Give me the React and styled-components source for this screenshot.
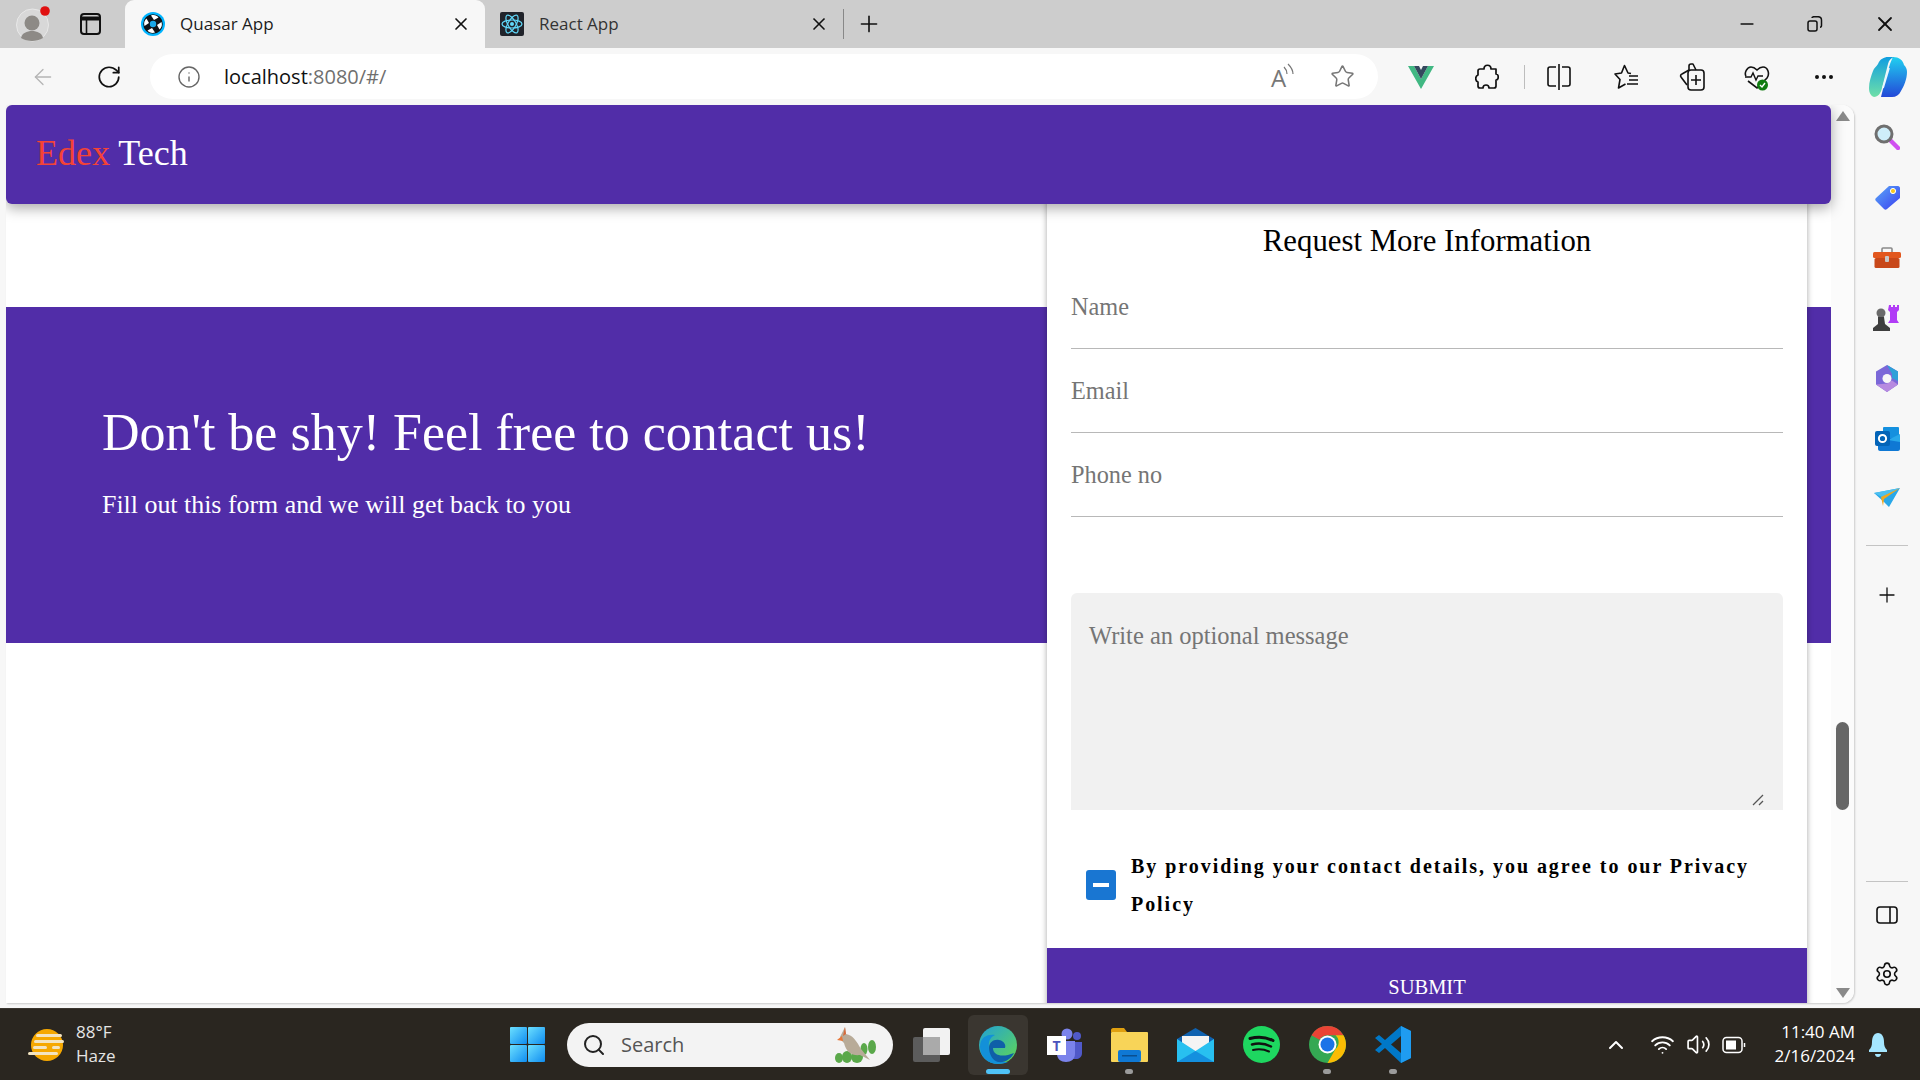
import React from "react";
import styled, { createGlobalStyle } from "styled-components";
import { ArrowLeft, RotateCw, Info, Star, X, Plus, Minus, Search, Settings, ChevronUp, Wifi, Volume2, MoreHorizontal } from "lucide-react";

const GlobalStyle = createGlobalStyle`
  html, body {
    margin: 0;
    padding: 0;
    width: 1920px;
    height: 1080px;
    overflow: hidden;
    background: #f7f7f7;
  }
  * { box-sizing: border-box; }
`;

const PURPLE = "#512da8";
const UI_FONT = `"Open Sans", "Noto Sans", sans-serif`;
const PAGE_FONT = `"Liberation Serif", "Times New Roman", serif`;

/* ---------- small drawn icons ---------- */

const Avatar = () => (
  <svg width="36" height="36" viewBox="0 0 36 36">
    <circle cx="16.500" cy="19" r="16" fill="#d8d8d8" stroke="#e8e8e8" />
    <circle cx="16" cy="17" r="7.500" fill="#8d8a86" />
    <path d="M5 32c1-5 6-7 11-7s10 2 11 7c-3 2-7 3-11 3s-8-1-11-3z" fill="#8d8a86" />
    <circle cx="29" cy="5" r="4.800" fill="#e01010" />
  </svg>
);

const TabsIcon = () => (
  <svg width="21" height="22" viewBox="0 0 21 22" fill="none" stroke="#111" strokeWidth="2">
    <rect x="1" y="1" width="19" height="20" rx="3" />
    <path d="M1 5.500h19" strokeWidth="4" />
    <path d="M6.500 6v15" strokeWidth="1.600" />
  </svg>
);

const QuasarIcon = () => (
  <svg width="24" height="24" viewBox="0 0 24 24">
    <circle cx="12" cy="12" r="12" fill="#00b4ff" />
    <circle cx="12" cy="12" r="9.800" fill="#101418" />
    <circle cx="12" cy="12" r="3.200" fill="#1aa8e8" />
    <g fill="#fff">
      <path d="M10 3.500c3-1 6 0 7.500 2l-4.500 2.500c-1-1.500-2-3-3-4.500z" />
      <path d="M20.500 10c1 3 0 6-2 7.500L16 13c1.500-1 3-2 4.500-3z" />
      <path d="M14 20.500c-3 1-6 0-7.500-2l4.500-2.500c1 1.500 2 3 3 4.500z" />
      <path d="M3.500 14c-1-3 0-6 2-7.500L8 11c-1.500 1-3 2-4.500 3z" />
    </g>
  </svg>
);

const ReactIcon = () => (
  <svg width="24" height="24" viewBox="0 0 24 24">
    <rect width="24" height="24" rx="2" fill="#20232a" />
    <g fill="none" stroke="#61dafb" strokeWidth="1.200">
      <ellipse cx="12" cy="12" rx="10" ry="4" />
      <ellipse cx="12" cy="12" rx="10" ry="4" transform="rotate(60 12 12)" />
      <ellipse cx="12" cy="12" rx="10" ry="4" transform="rotate(120 12 12)" />
    </g>
    <circle cx="12" cy="12" r="2" fill="#61dafb" />
  </svg>
);

const ReadAloudIcon = () => (
  <svg width="26" height="38" viewBox="0 0 26 38" fill="none" stroke="#777" strokeWidth="1.200">
    <text x="1" y="29" fontFamily={UI_FONT} fontSize="24" fill="#777" stroke="none">A</text>
    <path d="M14 9c2 2 3 4 3 7" />
    <path d="M18 6c3 3 5 6 5 10" />
  </svg>
);

const VueIcon = () => (
  <svg width="26" height="24" viewBox="0 0 26 24">
    <path d="M0 1h6l7 13 7-13h6L13 24z" fill="#41b883" />
    <path d="M6 1h5l2 4 2-4h5l-7 13z" fill="#34495e" />
  </svg>
);

const PuzzleIcon = () => (
  <svg width="24" height="26" viewBox="0 0 24 26" fill="none" stroke="#111" strokeWidth="1.700" strokeLinejoin="round">
    <path d="M9 5c0-5 7-5 7 0h5v5c3 0 3 6 0 6v6c0 1-1 2-2 2h-5c0-4-6-4-6 0H5c-1 0-2-1-2-2v-4c-3-1-3-6 0-7V7c0-1 1-2 2-2z" />
  </svg>
);

const SplitIcon = () => (
  <svg width="24" height="28" viewBox="0 0 24 28" fill="none" stroke="#111" strokeWidth="1.600">
    <path d="M9 4H3a2 2 0 0 0-2 2v15a2 2 0 0 0 2 2h6" />
    <path d="M15 4h6a2 2 0 0 1 2 2v15a2 2 0 0 1-2 2h-6" />
    <path d="M12 1v26" />
  </svg>
);

const FavoritesIcon = () => (
  <svg width="25" height="26" viewBox="0 0 25 26" fill="none" stroke="#111" strokeWidth="1.600" strokeLinejoin="round">
    <path d="M17 9.500l-3-.5-3.500-7.500L7.500 9l-6.500 1 5 5.500-1.500 8.500 7-4" />
    <path d="M15 12h9M15 16h9M13 20h11" />
  </svg>
);

const CollectionsIcon = () => (
  <svg width="26" height="30" viewBox="0 0 26 30" fill="none" stroke="#111" strokeWidth="1.600" strokeLinejoin="round">
    <path d="M10 8V4c0-1 1-2 2-2h2l3 6" />
    <path d="M8 23l-6-8c-1-1 0-3 1-3l7-4" />
    <rect x="9" y="8" width="16" height="20" rx="3" />
    <path d="M17 13v10M12 18h10" />
  </svg>
);

const HealthIcon = () => (
  <svg width="26" height="28" viewBox="0 0 26 28" fill="none">
    <path d="M4 18l9 7 10-10c3-4 1-11-4-11-3 0-5 2-6 3-1-1-3-3-6-3C3 4 0 10 2 13" stroke="#111" strokeWidth="1.600" />
    <path d="M1 14h6l2-4 3 7 2-4h5" stroke="#111" strokeWidth="1.400" />
    <circle cx="18.500" cy="22" r="5.500" fill="#107c10" />
    <path d="M16 22l2 2 3-4" stroke="#fff" strokeWidth="1.400" />
  </svg>
);

const CopilotIcon = () => (
  <svg width="38" height="42" viewBox="0 0 38 42">
    <defs>
      <linearGradient id="cpA" x1="0" y1="0" x2="0" y2="1">
        <stop offset="0" stopColor="#0f9ee0" />
        <stop offset="1" stopColor="#6fe0a8" />
      </linearGradient>
      <linearGradient id="cpB" x1="0" y1="0" x2="0" y2="1">
        <stop offset="0" stopColor="#20d0f0" />
        <stop offset="1" stopColor="#2348d8" />
      </linearGradient>
    </defs>
    <path d="M24 1c6 0 10 3 11 8 2 2 3 4 3 7 0 7-3 14-6 19-2 4-5 6-9 6H12l5-20 4-13c1-3 2-5 3-7z" fill="url(#cpB)" />
    <path d="M9 8c2-5 6-7 10-7h6c-3 1-5 3-6 7L13 32c-1 5-4 9-8 9-3-1-5-4-5-9 0-6 2-12 4-17 1-3 3-4 5-7z" fill="url(#cpA)" />
    <path d="M20 12l-6 20" stroke="#e8f8ff" strokeWidth="1.800" />
  </svg>
);

const MagnifierIcon = () => (
  <svg width="26" height="26" viewBox="0 0 26 26">
    <path d="M16 16l8 8" stroke="#d050f0" strokeWidth="4.500" strokeLinecap="round" />
    <circle cx="10" cy="10" r="8" fill="#cfeefa" stroke="#6f6f6f" strokeWidth="3" />
  </svg>
);

const TagIcon = () => (
  <svg width="25" height="25" viewBox="0 0 25 25">
    <defs>
      <linearGradient id="tagG" x1="0" y1="0" x2="1" y2="1">
        <stop offset="0" stopColor="#5aa8f8" />
        <stop offset="1" stopColor="#3a3ef0" />
      </linearGradient>
    </defs>
    <path d="M14 1h9c1 0 2 1 2 2v10L12 24c-1 1-2 1-3 0L1 16c-1-1-1-2 0-3z" fill="url(#tagG)" />
    <circle cx="18" cy="6" r="2.600" fill="#f8c820" stroke="#fff" />
  </svg>
);

const ToolboxIcon = () => (
  <svg width="28" height="22" viewBox="0 0 28 22">
    <path d="M9 5V2c0-1 1-1 1-1h8s1 0 1 1v3" fill="none" stroke="#8a8a8a" strokeWidth="1.600" />
    <rect y="5" width="28" height="6" rx="1.500" fill="#e2571e" />
    <rect x="1.500" y="11" width="25" height="10" rx="1.500" fill="#c8481a" />
    <rect x="12" y="9" width="4" height="6" rx="1" fill="#c8c8c8" />
  </svg>
);

const ChessIcon = () => (
  <svg width="28" height="28" viewBox="0 0 28 28">
    <path d="M16 1h2v2h2V1h2v2h2V1h2v5l-2 2v8l2 3H15l2-3V8l-2-2z" fill="#b13cf6" />
    <circle cx="8" cy="9" r="4.500" fill="#6a6a6a" />
    <path d="M5 13h6l1 7 5 4v3H0v-3l5-4z" fill="#3e3e3e" />
  </svg>
);

const M365Icon = () => (
  <svg width="24" height="27" viewBox="0 0 24 27">
    <path d="M12 0l11 6.500v13L12 27 1 19.500v-13z" fill="#7b68d8" />
    <path d="M12 0l11 6.500V16l-6-3V9z" fill="#2ea0d8" />
    <path d="M1 19.500L12 27l11-7.500-6-4-5 3z" fill="#b78ae0" />
    <circle cx="12" cy="13.500" r="4.500" fill="#f7f7f7" />
  </svg>
);

const OutlookIcon = () => (
  <svg width="25" height="25" viewBox="0 0 25 25">
    <rect x="8" y="1" width="16" height="12" rx="1" fill="#1490df" />
    <path d="M3 12h22v11c0 1-1 2-2 2H5c-1 0-2-1-2-2z" fill="#0f78d4" />
    <path d="M13 14l12-6v8z" fill="#28a8ea" />
    <rect y="5" width="15" height="15" rx="2" fill="#0364b8" />
    <circle cx="7.500" cy="12.500" r="3.600" fill="none" stroke="#fff" strokeWidth="2" />
  </svg>
);

const PlaneIcon = () => (
  <svg width="26" height="20" viewBox="0 0 26 20">
    <path d="M0 5L26 0 15 19 10 14z" fill="#2aa8e8" />
    <path d="M0 5l8 4L26 0z" fill="#4cc0f0" />
    <path d="M7 9L26 0 10 11l-1 7z" fill="#f0a820" />
  </svg>
);

const PanelIcon = () => (
  <svg width="22" height="18" viewBox="0 0 22 18" fill="none" stroke="#111" strokeWidth="1.600">
    <rect x="1" y="1" width="20" height="16" rx="3" />
    <path d="M14 1v16" />
  </svg>
);

const RestoreIcon = () => (
  <svg width="16" height="16" viewBox="0 0 16 16" fill="none" stroke="#111" strokeWidth="1.500">
    <rect x="1" y="5" width="9" height="10" rx="2" />
    <path d="M5 2c0-1 1-1.300 2-1.300h4c2 0 3.500 1.300 3.500 3.500v5c0 1-.4 2-1.500 2" />
  </svg>
);

const WeatherIcon = () => (
  <svg width="36" height="32" viewBox="0 0 36 32">
    <ellipse cx="19" cy="16" rx="16" ry="16" fill="#f6a800" />
    <g fill="#f3e4c0">
      <rect x="8" y="5" width="26" height="3" rx="1.500" />
      <rect x="6" y="11" width="30" height="3" rx="1.500" />
      <rect x="5" y="17" width="14" height="3" rx="1.500" />
      <rect x="24" y="17" width="8" height="3" rx="1.500" />
      <rect x="0" y="23" width="30" height="3" rx="1.500" />
    </g>
  </svg>
);

const WindowsIcon = () => (
  <svg width="35" height="35" viewBox="0 0 35 35">
    <defs>
      <linearGradient id="winG" x1="0" y1="0" x2="1" y2="1">
        <stop offset="0" stopColor="#6ce0ff" />
        <stop offset="1" stopColor="#0f8cf0" />
      </linearGradient>
    </defs>
    <rect width="17" height="17" rx="1" fill="url(#winG)" />
    <rect x="18" width="17" height="17" rx="1" fill="url(#winG)" />
    <rect y="18" width="17" height="17" rx="1" fill="url(#winG)" />
    <rect x="18" y="18" width="17" height="17" rx="1" fill="url(#winG)" />
  </svg>
);

const BirdIcon = () => (
  <svg width="46" height="36" viewBox="0 0 46 36">
    <g fill="#5aa84a">
      <ellipse cx="5" cy="31" rx="4" ry="5" />
      <ellipse cx="13" cy="30" rx="5" ry="6" />
      <ellipse cx="23" cy="30" rx="6" ry="6" />
      <ellipse cx="30" cy="22" rx="3.500" ry="6" />
      <ellipse cx="38" cy="20" rx="4" ry="7" />
    </g>
    <path d="M6 10l5-10 1 7c7 1 11 8 15 15l9 11-10-5c-8 1-14-3-16-12l-3-3z" fill="#b8ab98" />
    <path d="M3 13l5-4 1 5z" fill="#e8783a" />
    <path d="M11 0l1 7-3 2z" fill="#d86a3a" />
  </svg>
);

const TaskViewIcon = () => (
  <svg width="38" height="34" viewBox="0 0 38 34">
    <rect x="0" y="9" width="27" height="25" rx="2" fill="#5c5c5c" />
    <rect x="10" y="0" width="27" height="27" rx="2" fill="#f2f2f2" />
    <rect x="10" y="9" width="17" height="18" fill="#aaa" />
  </svg>
);

const EdgeIcon = () => (
  <svg width="38" height="38" viewBox="0 0 38 38">
    <defs>
      <linearGradient id="edgeA" x1="0" y1="0" x2="1" y2="1">
        <stop offset="0" stopColor="#20a0d8" />
        <stop offset="1" stopColor="#62d850" />
      </linearGradient>
    </defs>
    <circle cx="19" cy="19" r="19" fill="url(#edgeA)" />
    <path d="M1 21C1 10 10 8 16 9c-5 2-7 7-6 13 1 8 10 15 19 14-3 1-6 2-10 2C9 38 1 31 1 21z" fill="#1390d8" />
    <path d="M10 22c0-6 5-9 10-8 6 1 7 6 6 8H14c0 6 6 9 15 7l6-2c-3 6-9 10-16 9-5-1-9-8-9-14z" fill="#0f5fa8" />
  </svg>
);

const TeamsIcon = () => (
  <svg width="36" height="34" viewBox="0 0 36 34">
    <circle cx="20" cy="6" r="5.500" fill="#7b83eb" />
    <circle cx="30" cy="8" r="4" fill="#5059c9" />
    <path d="M25 14h10v11c0 4-3 6-6 6h-4z" fill="#5059c9" />
    <path d="M10 13h18v13c0 5-4 8-9 8s-9-3-9-8z" fill="#7b83eb" />
    <rect x="0" y="8" width="19" height="19" fill="#fff" />
    <text x="9.500" y="23" textAnchor="middle" fontFamily={UI_FONT} fontWeight="700" fontSize="14" fill="#4b53bc">T</text>
  </svg>
);

const FolderIcon = () => (
  <svg width="37" height="34" viewBox="0 0 37 34">
    <path d="M0 2c0-1 1-2 2-2h11l3 4h-16z" fill="#e0a010" />
    <rect y="4" width="37" height="30" rx="1" fill="#f8d458" />
    <rect x="7" y="22" width="23" height="12" rx="2" fill="#0f78d4" />
    <rect x="11" y="27" width="15" height="1.500" fill="#0a4f90" />
  </svg>
);

const MailIcon = () => (
  <svg width="37" height="34" viewBox="0 0 37 34">
    <path d="M18.500 0L37 11v6H0v-6z" fill="#0f62b0" />
    <path d="M5 8h27v10l-13.500 7L5 18z" fill="#f4f4f4" />
    <path d="M0 11l18.500 12L37 11v23H0z" fill="#28c0f0" />
    <path d="M0 34l18.500-11L37 34z" fill="#1490df" />
  </svg>
);

const SpotifyIcon = () => (
  <svg width="37" height="37" viewBox="0 0 37 37" fill="none">
    <circle cx="18.500" cy="18.500" r="18.500" fill="#1ed760" />
    <path d="M7 12.500c7-2 16-1.500 23 2" stroke="#111" strokeWidth="3" strokeLinecap="round" />
    <path d="M9 18.500c6-1.500 13-1 19 2" stroke="#111" strokeWidth="2.500" strokeLinecap="round" />
    <path d="M10 24c5-1.200 11-.8 16 1.500" stroke="#111" strokeWidth="2" strokeLinecap="round" />
  </svg>
);

const ChromeIcon = () => (
  <svg width="37" height="37" viewBox="0 0 37 37">
    <circle cx="18.500" cy="18.500" r="18.500" fill="#34a853" />
    <path d="M18.500 0A18.500 18.500 0 0 1 34.500 9.250H18.500a9.250 9.250 0 0 0-8 4.600L2.500 9.250A18.500 18.500 0 0 1 18.500 0z" fill="#ea4335" />
    <path d="M34.500 9.250A18.500 18.500 0 0 1 18.500 37l8-13.900a9.250 9.250 0 0 0 0-13.850z" fill="#fbbc04" />
    <circle cx="18.500" cy="18.500" r="9" fill="#fff" />
    <circle cx="18.500" cy="18.500" r="7" fill="#1a73e8" />
  </svg>
);

const VscodeIcon = () => (
  <svg width="36" height="37" viewBox="0 0 36 37">
    <path d="M26 0l10 5v27l-10 5L10 22l-6 5-4-3 7-6-7-6 4-3 6 5z" fill="#0078c8" />
    <path d="M26 0l10 5v27l-10 5z" fill="#1f9cf0" />
    <path d="M26 10v17l-10-8.500z" fill="#2a2620" />
  </svg>
);

const BatteryIcon = () => (
  <svg width="24" height="18" viewBox="0 0 24 18" fill="none" stroke="#fff" strokeWidth="1.500">
    <rect x="1" y="1.500" width="19" height="15" rx="3.500" />
    <rect x="4" y="4.500" width="10" height="9" fill="#fff" stroke="none" />
    <path d="M22.500 7v4" />
  </svg>
);

const BellIcon = () => (
  <svg width="20" height="26" viewBox="0 0 20 26">
    <path d="M10 1c4 0 6 4 6 9 0 4 1 6 3 8v2H1v-2c2-2 3-4 3-8 0-5 2-9 6-9z" fill="#a5e6ff" />
    <path d="M7 22h6c0 2-1.500 3-3 3s-3-1-3-3z" fill="#a5e6ff" />
  </svg>
);

const ResizeGrip = () => (
  <svg width="12" height="12" viewBox="0 0 12 12" fill="none" stroke="#555" strokeWidth="1.200">
    <path d="M1 11L11 1" />
    <path d="M7 11l4-4" />
  </svg>
);

/* ---------- browser chrome ---------- */

const Screen = styled.div`
  display: flex;
  flex-direction: column;
  width: 1920px;
  height: 1080px;
  overflow: hidden;
  background: #f7f7f7;
`;

const TabStrip = styled.div`
  display: flex;
  flex: none;
  align-items: center;
  height: 48px;
  padding-left: 16px;
  background: #cdcdcd;
  font-family: ${UI_FONT};
`;

const ProfileSlot = styled.div`
  display: flex;
  width: 64px;
`;

const TabsSlot = styled.div`
  display: flex;
  width: 45px;
`;

const Tab = styled.div`
  display: flex;
  align-items: center;
  align-self: stretch;
  width: ${p => p.$width}px;
  padding: 0 14px 0 ${p => p.$pad}px;
  color: ${p => (p.$active ? "#1c1c1c" : "#333")};
  background: ${p => (p.$active ? "#f7f7f7" : "transparent")};
  border-radius: 9px 9px 0 0;
  font-size: 17px;
`;

const TabTitle = styled.span`
  flex: 1;
  margin: -2px 0 0 15px;
`;

const NewTab = styled.div`
  display: flex;
  align-items: center;
  height: 30px;
  padding-left: 12px;
  border-left: 1px solid #888;
`;

const WindowControls = styled.div`
  display: flex;
  align-items: center;
  gap: 50px;
  margin-left: auto;
  padding-right: 23px;
`;

const Toolbar = styled.div`
  display: flex;
  flex: none;
  align-items: center;
  height: 57px;
  padding-left: 30px;
  background: #f7f7f7;
`;

const NavSlot = styled.div`
  display: flex;
  flex: none;
  width: ${p => p.$w}px;
`;

const AddressBar = styled.div`
  display: flex;
  flex: none;
  align-items: center;
  width: 1228px;
  height: 45px;
  padding: 0 23px 0 27px;
  background: #fff;
  border-radius: 23px;
  font-family: ${UI_FONT};
  font-size: 20px;
`;

const Url = styled.div`
  flex: 1;
  margin-left: 23px;
  color: #111;
  span { color: #6f6f6f; }
`;

const AddressActions = styled.div`
  display: flex;
  align-items: center;
  gap: 34px;
`;

const ToolActions = styled.div`
  display: flex;
  flex: none;
  align-items: center;
  margin-left: 30px;
`;

const ToolIcon = styled.div`
  display: flex;
  justify-content: center;
  align-items: center;
  margin-left: ${p => p.$ml || 0}px;
`;

const ToolSep = styled.div`
  width: 1px;
  height: 24px;
  margin-left: 25px;
  background: #bdbdbd;
`;

/* ---------- page area ---------- */

const Body = styled.div`
  display: flex;
  flex: none;
  height: 898px;
  padding-left: 6px;
`;

const PageFrame = styled.div`
  display: flex;
  flex: none;
  width: 1848px;
  background: #fff;
  border-radius: 0 12px 12px 0;
  box-shadow: 1px 1px 2px rgba(0, 0, 0, 0.18);
  overflow: hidden;
`;

const Page = styled.div`
  display: flex;
  flex-direction: column;
  flex: none;
  width: 1825px;
  background: #fff;
  font-family: ${PAGE_FONT};
`;

const AppHeader = styled.header`
  position: relative;
  z-index: 2;
  display: flex;
  align-items: center;
  flex: none;
  height: 99px;
  padding: 0 0 4px 30px;
  background: ${PURPLE};
  border-radius: 6px;
  box-shadow: 0 4px 14px rgba(0, 0, 0, 0.35);
  font-size: 36px;
  color: #fff;
  em {
    color: #f44336;
    font-style: normal;
  }
`;

const Main = styled.main`
  position: relative;
  flex: 1;
  overflow: hidden;
  padding-top: 103px;
`;

const Banner = styled.section`
  height: 336px;
  padding: 96px 0 0 96px;
  background: ${PURPLE};
  color: #fff;
  h1 {
    margin: 0;
    font-size: 52px;
    font-weight: 400;
    line-height: 60px;
  }
  p {
    margin: 27px 0 0;
    font-size: 25.900px;
    line-height: 30px;
  }
`;

const FormCard = styled.form`
  position: absolute;
  top: -20px;
  right: 24px;
  display: flex;
  flex-direction: column;
  width: 760px;
  padding-top: 40px;
  background: #fff;
  box-shadow: 0 0 6px rgba(0, 0, 0, 0.35);
`;

const FormTitle = styled.h2`
  margin: 0 0 7px;
  font-size: 30.800px;
  font-weight: 400;
  line-height: 34px;
  text-align: center;
  color: #000;
`;

const TextField = styled.input`
  display: block;
  flex: none;
  width: 712px;
  height: 84px;
  margin-left: 24px;
  padding: 1px 0 0;
  border: 0;
  border-bottom: 1px solid #b8b8b8;
  outline: 0;
  background: transparent;
  font-family: ${PAGE_FONT};
  font-size: 24.300px;
  &::placeholder { color: #757575; }
`;

const MessageWrap = styled.div`
  position: relative;
  flex: none;
  width: 712px;
  margin: 76px 0 0 24px;
  svg {
    position: absolute;
    right: 19px;
    bottom: 4px;
  }
`;

const MessageBox = styled.textarea`
  display: block;
  width: 100%;
  height: 217px;
  padding: 29px 18px;
  border: 0;
  border-radius: 6px 6px 0 0;
  outline: 0;
  resize: none;
  background: #f1f1f1;
  font-family: ${PAGE_FONT};
  font-size: 24.500px;
  &::placeholder { color: #757575; }
`;

const ConsentRow = styled.div`
  display: flex;
  align-items: center;
  gap: 15px;
  margin: 37px 0 25px 39px;
  padding-right: 30px;
  font-size: 20px;
  font-weight: 700;
  line-height: 38px;
  letter-spacing: 1.950px;
  color: #000;
`;

const Checkbox = styled.span`
  display: flex;
  flex: none;
  justify-content: center;
  align-items: center;
  width: 30px;
  height: 30px;
  background: #1976d2;
  border-radius: 3px;
  &::after {
    content: "";
    width: 16px;
    height: 4px;
    background: #fff;
  }
`;

const SubmitButton = styled.button`
  display: block;
  flex: none;
  width: 100%;
  height: 78px;
  border: 0;
  background: ${PURPLE};
  color: #fff;
  font-family: ${PAGE_FONT};
  font-size: 20.500px;
`;

const ScrollTrack = styled.div`
  display: flex;
  flex: 1;
  flex-direction: column;
  align-items: center;
  padding: 6px 0 5px;
  background: #fbfbfb;
`;

const ScrollArrow = styled.div`
  flex: none;
  width: 0;
  height: 0;
  border-left: 7px solid transparent;
  border-right: 7px solid transparent;
  ${p => (p.$down ? "border-top: 10px solid #8a8a8a;" : "border-bottom: 10px solid #8a8a8a;")}
`;

const ScrollThumb = styled.div`
  flex: none;
  width: 13px;
  height: 88px;
  margin: 601px 0 auto;
  border-radius: 7px;
  background: #666;
`;

const SideBar = styled.aside`
  display: flex;
  flex-direction: column;
  align-items: center;
  flex: 1;
  padding-top: 19px;
`;

const SideIcon = styled.div`
  display: flex;
  justify-content: center;
  align-items: center;
  flex: none;
  width: 100%;
  height: ${p => p.$h || 60}px;
`;

const SideSep = styled.div`
  flex: none;
  width: 42px;
  height: 1px;
  margin: ${p => p.$m};
  background: #c4c4c4;
`;

/* ---------- taskbar ---------- */

const Taskbar = styled.footer`
  display: flex;
  flex: none;
  align-items: center;
  height: 72px;
  margin-top: 5px;
  padding: 0 0 0 28px;
  background: #2a2620;
  border-top: 1px solid #3a3630;
  font-family: ${UI_FONT};
  color: #fff;
`;

const Weather = styled.div`
  display: flex;
  flex: none;
  align-items: center;
  gap: 12px;
  width: 482px;
`;

const TrayText = styled.div`
  margin-top: -2px;
  font-size: 17px;
  line-height: 24px;
  white-space: nowrap;
  text-align: ${p => p.$align || "left"};
  span { display: block; color: ${p => p.$dim || "#fff"}; }
`;

const SearchPill = styled.div`
  display: flex;
  flex: none;
  align-items: center;
  width: 326px;
  height: 44px;
  margin: 0 20px 0 22px;
  padding: 0 13px 0 15px;
  background: #f3f3f3;
  border-radius: 22px;
  color: #555;
  font-size: 20px;
  span {
    flex: 1;
    margin-left: 15px;
  }
`;

const AppRow = styled.div`
  display: flex;
  flex: none;
  align-items: center;
  margin-left: 17px;
`;

const AppButton = styled.div`
  position: relative;
  display: flex;
  justify-content: center;
  align-items: center;
  flex: none;
  width: ${p => p.$w || 66}px;
  height: 60px;
  margin-left: ${p => p.$ml || 0}px;
  border-radius: 6px;
  background: ${p => (p.$active ? "#3a3630" : "transparent")};
`;

/* running indicator sits over the button */
const RunDot = styled.span`
  position: absolute;
  bottom: 1px;
  left: 50%;
  width: ${p => (p.$active ? 24 : 8)}px;
  height: 5px;
  transform: translateX(-50%);
  border-radius: 3px;
  background: ${p => (p.$active ? "#4fc3f7" : "#9b9b9b")};
`;

const Tray = styled.div`
  display: flex;
  flex: none;
  align-items: center;
  gap: 11px;
  margin-left: 178px;
  svg:first-child { margin-right: 11px; }
`;

const Clock = styled.div`
  flex: none;
  width: 90px;
  margin-left: 19px;
`;

const BellSlot = styled.div`
  display: flex;
  margin-left: 13px;
`;

const apps = [
  { icon: <TeamsIcon />, w: 62, ml: 6 },
  { icon: <FolderIcon />, w: 66, run: true },
  { icon: <MailIcon />, w: 66 },
  { icon: <SpotifyIcon />, w: 66 },
  { icon: <ChromeIcon />, w: 66, run: true },
  { icon: <VscodeIcon />, w: 66, run: true },
];

export default function App() {
  return (
    <Screen>
      <GlobalStyle />
      <TabStrip>
        <ProfileSlot><Avatar /></ProfileSlot>
        <TabsSlot><TabsIcon /></TabsSlot>
        <Tab $active $width={360} $pad={16}>
          <QuasarIcon />
          <TabTitle>Quasar App</TabTitle>
          <X size={20} color="#111" />
        </Tab>
        <Tab $width={358} $pad={15}>
          <ReactIcon />
          <TabTitle>React App</TabTitle>
          <X size={20} color="#111" />
        </Tab>
        <NewTab><Plus size={26} strokeWidth={1.5} color="#111" /></NewTab>
        <WindowControls>
          <Minus size={20} color="#111" />
          <RestoreIcon />
          <X size={24} strokeWidth={1.8} color="#111" />
        </WindowControls>
      </TabStrip>

      <Toolbar>
        <NavSlot $w={66}><ArrowLeft size={26} strokeWidth={1.2} color="#b5b5b5" /></NavSlot>
        <NavSlot $w={54}><RotateCw size={26} strokeWidth={1.6} color="#111" /></NavSlot>
        <AddressBar>
          <Info size={24} strokeWidth={1.4} color="#666" />
          <Url>localhost<span>:8080/#/</span></Url>
          <AddressActions>
            <ReadAloudIcon />
            <Star size={25} strokeWidth={1.5} color="#777" />
          </AddressActions>
        </AddressBar>
        <ToolActions>
          <ToolIcon><VueIcon /></ToolIcon>
          <ToolIcon $ml={41}><PuzzleIcon /></ToolIcon>
          <ToolSep />
          <ToolIcon $ml={22}><SplitIcon /></ToolIcon>
          <ToolIcon $ml={43}><FavoritesIcon /></ToolIcon>
          <ToolIcon $ml={40}><CollectionsIcon /></ToolIcon>
          <ToolIcon $ml={39}><HealthIcon /></ToolIcon>
          <ToolIcon $ml={42}><MoreHorizontal size={24} color="#111" /></ToolIcon>
          <ToolIcon $ml={33}><CopilotIcon /></ToolIcon>
        </ToolActions>
      </Toolbar>

      <Body>
        <PageFrame>
          <Page>
            <AppHeader>
              <span><em>Edex</em> Tech</span>
            </AppHeader>
            <Main>
              <Banner>
                <h1>Don't be shy! Feel free to contact us!</h1>
                <p>Fill out this form and we will get back to you</p>
              </Banner>
              <FormCard onSubmit={e => e.preventDefault()}>
                <FormTitle>Request More Information</FormTitle>
                <TextField placeholder="Name" />
                <TextField placeholder="Email" />
                <TextField placeholder="Phone no" />
                <MessageWrap>
                  <MessageBox placeholder="Write an optional message" />
                  <ResizeGrip />
                </MessageWrap>
                <ConsentRow>
                  <Checkbox />
                  <span>By providing your contact details, you agree to our Privacy Policy</span>
                </ConsentRow>
                <SubmitButton type="submit">SUBMIT</SubmitButton>
              </FormCard>
            </Main>
          </Page>
          <ScrollTrack>
            <ScrollArrow />
            <ScrollThumb />
            <ScrollArrow $down />
          </ScrollTrack>
        </PageFrame>
        <SideBar>
          <SideIcon $h={26}><MagnifierIcon /></SideIcon>
          <SideIcon $h={95}><TagIcon /></SideIcon>
          <SideIcon $h={26}><ToolboxIcon /></SideIcon>
          <SideIcon $h={94}><ChessIcon /></SideIcon>
          <SideIcon $h={26}><M365Icon /></SideIcon>
          <SideIcon $h={94}><OutlookIcon /></SideIcon>
          <SideIcon $h={26}><PlaneIcon /></SideIcon>
          <SideSep $m="34px 0 0" />
          <SideIcon $h={98}><Plus size={24} strokeWidth={1.3} color="#111" /></SideIcon>
          <SideSep $m="237px 0 0" />
          <SideIcon $h={66}><PanelIcon /></SideIcon>
          <SideIcon $h={52}><Settings size={26} strokeWidth={1.5} color="#111" /></SideIcon>
        </SideBar>
      </Body>

      <Taskbar>
        <Weather>
          <WeatherIcon />
          <TrayText $dim="#e4e4e4"><span>88°F</span><span>Haze</span></TrayText>
        </Weather>
        <WindowsIcon />
        <SearchPill>
          <Search size={24} strokeWidth={2} color="#222" />
          <span>Search</span>
          <BirdIcon />
        </SearchPill>
        <TaskViewIcon />
        <AppRow>
          <AppButton $active $w={60}>
            <EdgeIcon />
            <RunDot $active />
          </AppButton>
          {apps.map((app, i) => (
            <AppButton key={i} $w={app.w} $ml={app.ml}>
              {app.icon}
              {app.run && <RunDot />}
            </AppButton>
          ))}
        </AppRow>
        <Tray>
          <ChevronUp size={24} strokeWidth={2} color="#fff" />
          <Wifi size={25} strokeWidth={1.8} color="#fff" />
          <Volume2 size={25} strokeWidth={1.6} color="#fff" />
          <BatteryIcon />
        </Tray>
        <Clock>
          <TrayText $align="right"><span>11:40 AM</span><span>2/16/2024</span></TrayText>
        </Clock>
        <BellSlot><BellIcon /></BellSlot>
      </Taskbar>
    </Screen>
  );
}
